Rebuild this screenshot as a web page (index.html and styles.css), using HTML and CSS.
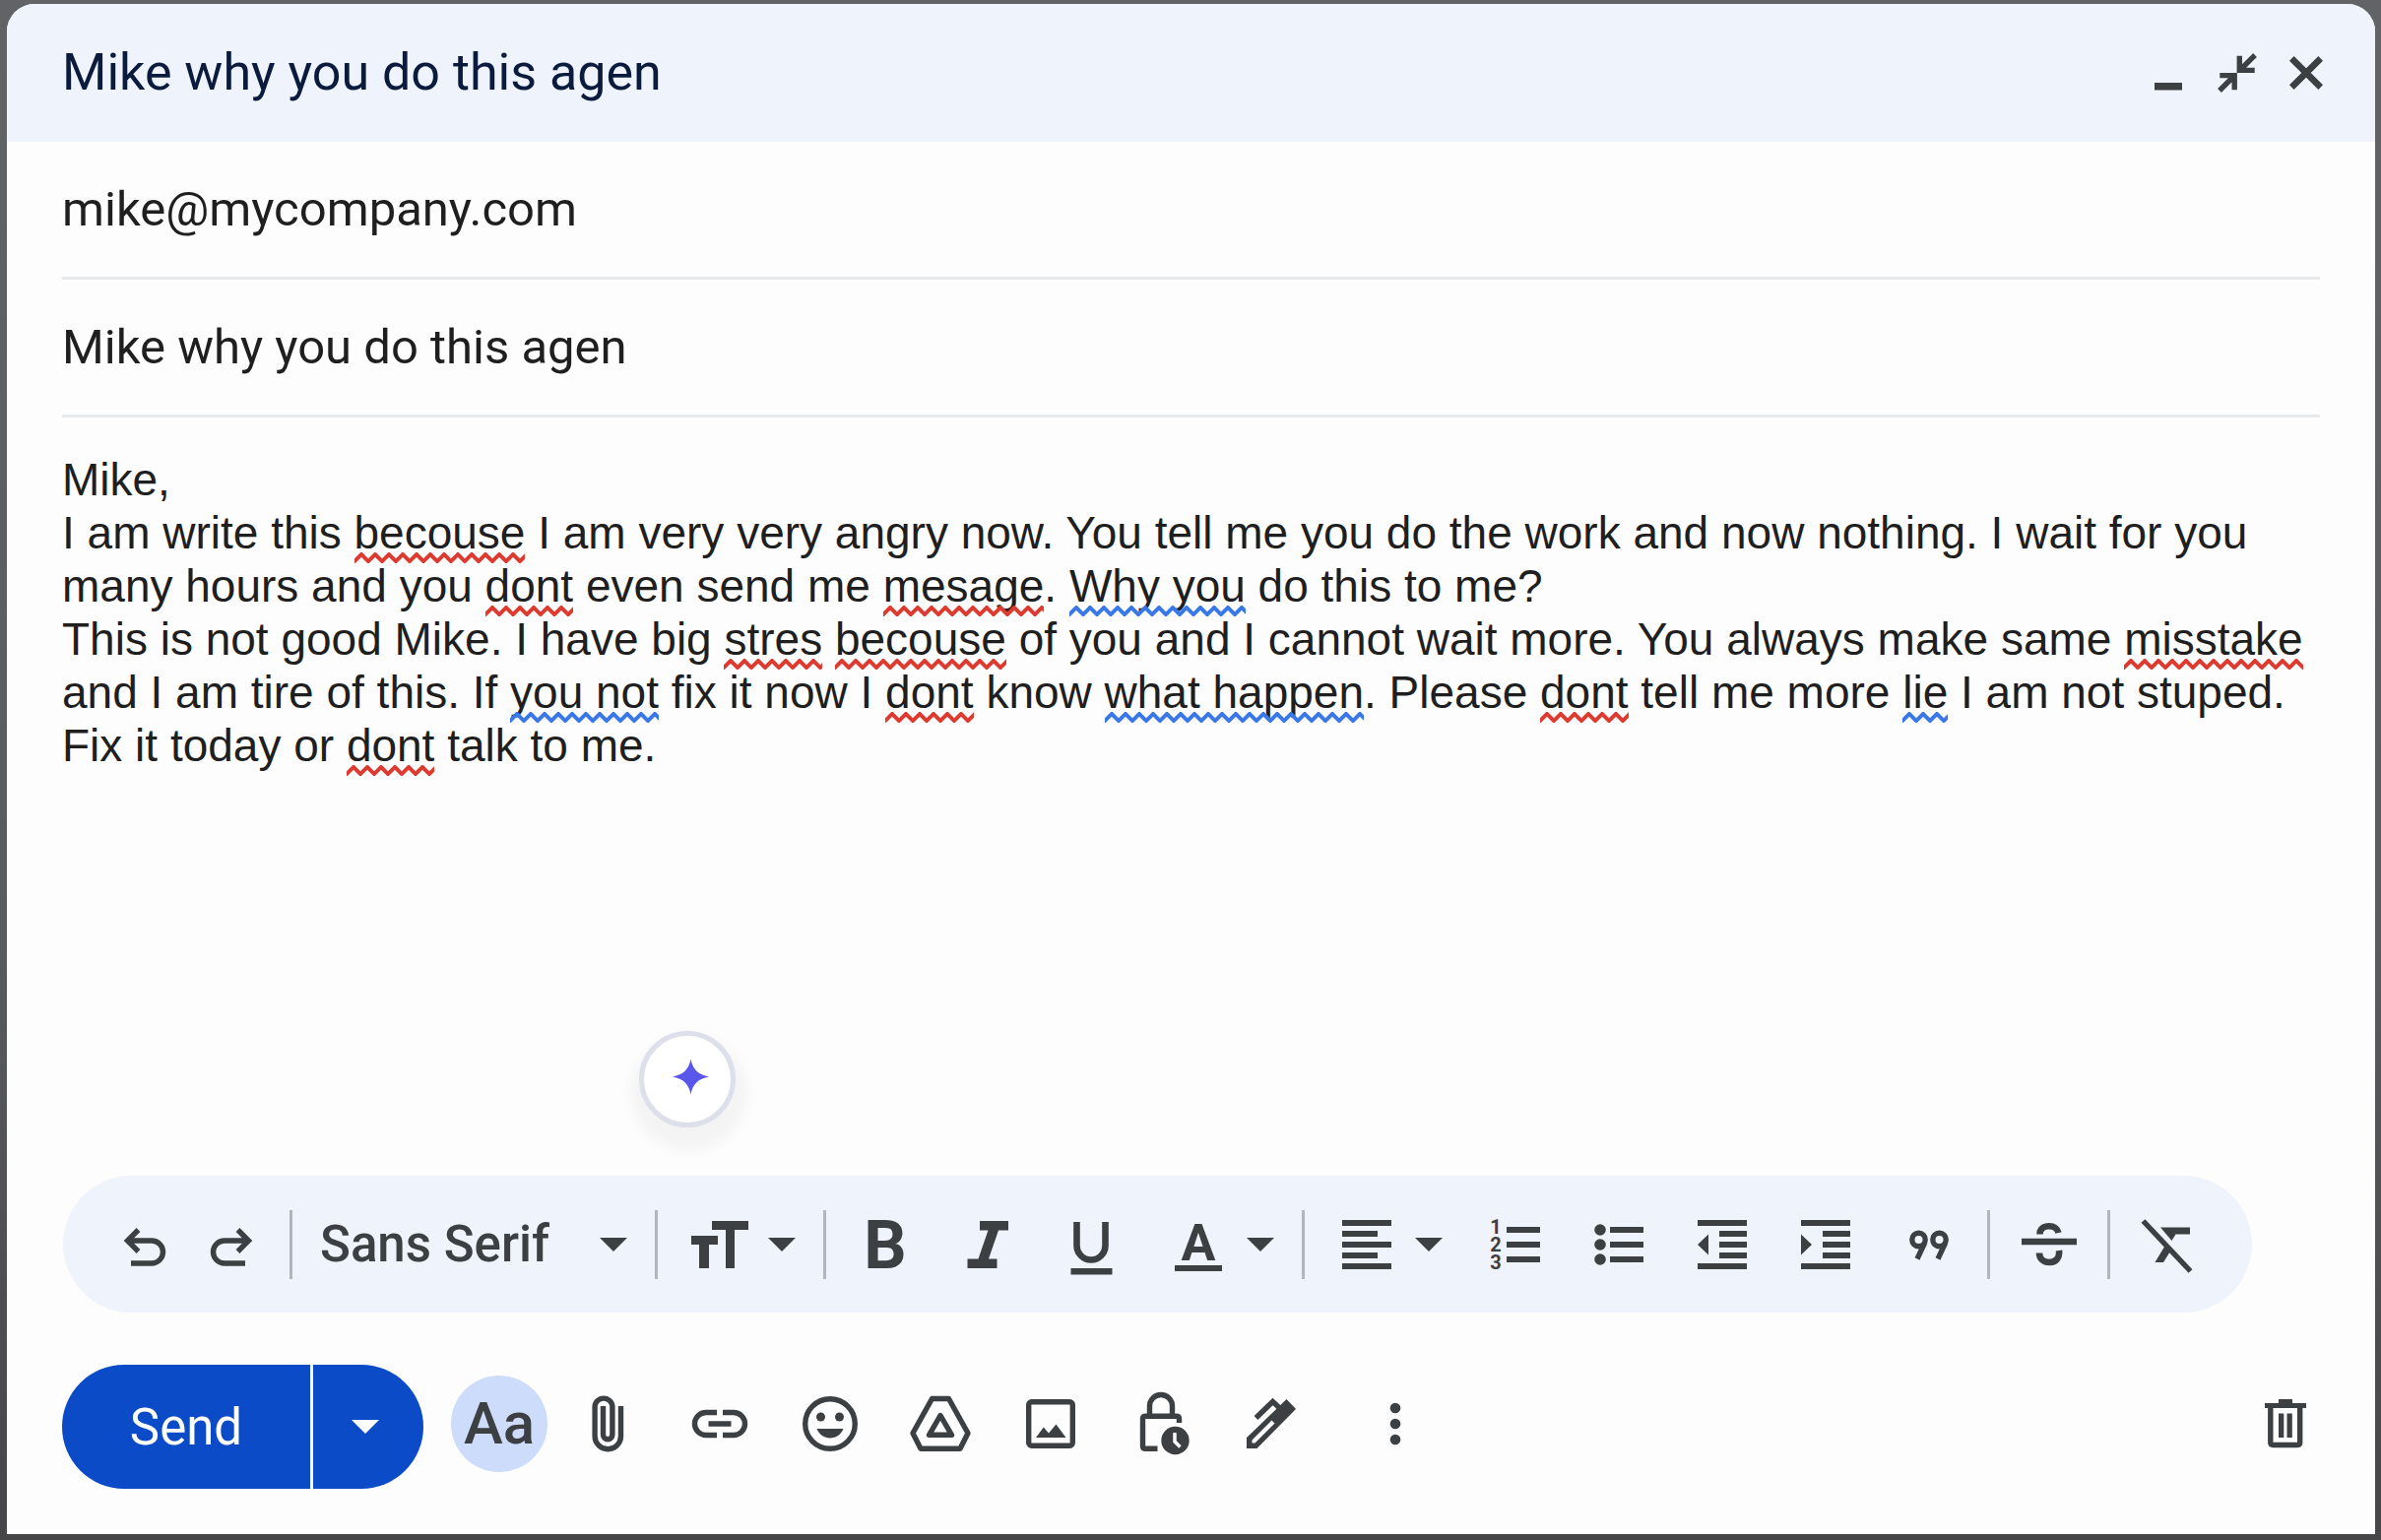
FILE: index.html
```html
<!DOCTYPE html>
<html lang="en">
<head>
  <meta charset="UTF-8" />
  <meta name="viewport" content="width=device-width, initial-scale=1.0"/>
  <title>Mike why you do this agen</title>
  <link rel="stylesheet" href="styles.css">
</head>
<body>
  <main class="compose">
    <header class="compose-header">
      <h1>Mike why you do this agen</h1>
      <button class="icon-btn" aria-label="Minimize">
        <svg class="icon" viewBox="0 0 70 70"><rect x="21" y="45" width="28" height="7.5"/></svg>
      </button>
      <button class="icon-btn" aria-label="Exit full screen">
        <svg class="icon line" viewBox="0 0 70 70"><path d="M37.3 17.7V32.4H52.7M38 32L53 17M32.2 52.3V37.6H17.3M32 38L17 53"/></svg>
      </button>
      <button class="icon-btn" aria-label="Close">
        <svg class="icon line thick" viewBox="0 0 70 70"><path d="M20.3 20.3L49.7 49.7M49.7 20.3L20.3 49.7"/></svg>
      </button>
    </header>

    <div class="field">
      <input type="text" aria-label="To" value="mike@mycompany.com">
    </div>
    <div class="field">
      <input type="text" aria-label="Subject" value="Mike why you do this agen">
    </div>

    <div class="editor">
      <div class="message" role="textbox" aria-label="Message body" aria-multiline="true" contenteditable="true" spellcheck="false">
        <p>Mike,</p>
        <p>I am write this <span class="spelling">becouse</span> I am very very angry now. You tell me you do the work and now nothing. I wait for you many hours and you <span class="spelling">dont</span> even send me <span class="spelling">mesage</span>. <span class="grammar">Why you</span> do this to me?</p>
        <p>This is not good Mike. I have big <span class="spelling">stres</span> <span class="spelling">becouse</span> of you and I cannot wait more. You always make same <span class="spelling">misstake</span> and I am tire of this. If <span class="grammar">you not</span> fix it now I <span class="spelling">dont</span> know <span class="grammar">what happen</span>. Please <span class="spelling">dont</span> tell me more <span class="grammar">lie</span> I am not stuped.</p>
        <p>Fix it today or <span class="spelling">dont</span> talk to me.</p>
      </div>
      <button class="assist" aria-label="Writing assistant">
        <svg viewBox="0 0 88 88"><path d="M47.500 23.500C49.500 34 55 39.500 66 41.500C55 43.500 49.500 49 47.500 59.500C45.500 49 40 43.500 29 41.500C40 39.500 45.500 34 47.500 23.500Z"/></svg>
      </button>
    </div>

    <div class="toolbar" role="toolbar" aria-label="Formatting options">
      <div class="history">
        <button class="tool" aria-label="Undo">
          <svg class="icon line" viewBox="0 0 70 70"><path d="M28.500 20L17.500 31L28.500 42M17.500 31H42a11.500 11.500 0 0 1 0 23H21"/></svg>
        </button>
        <button class="tool" aria-label="Redo">
          <svg class="icon line" viewBox="0 0 70 70"><path d="M41.500 20L52.500 31L41.500 42M52.500 31H28a11.500 11.500 0 0 0 0 23H49"/></svg>
        </button>
      </div>
      <span class="divider"></span>
      <div class="font-picker">
        <select aria-label="Font">
          <option>Sans Serif</option>
          <option>Serif</option>
          <option>Fixed Width</option>
        </select>
        <svg class="caret" viewBox="0 0 28 14"><path d="M0 0H28L14 14Z"/></svg>
      </div>
      <span class="divider"></span>
      <button class="tool with-caret" aria-label="Size">
        <svg class="icon" viewBox="0 0 70 70">
          <rect x="27" y="11" width="37" height="9"/><rect x="41" y="11" width="9" height="48"/>
          <rect x="6" y="26" width="27" height="9"/><rect x="14" y="26" width="10" height="33"/>
        </svg>
        <svg class="caret" viewBox="0 0 28 14"><path d="M0 0H28L14 14Z"/></svg>
      </button>
      <span class="divider"></span>
      <button class="tool" aria-label="Bold">
        <svg class="icon" viewBox="0 0 70 70"><text class="glyph-bold" x="35" y="59">B</text></svg>
      </button>
      <button class="tool" aria-label="Italic">
        <svg class="icon" viewBox="0 0 70 70"><path d="M26 11H55V20.500H45L35 49.500H43.500V59H13.500V49.500H24.500L34.500 20.500H26Z"/></svg>
      </button>
      <button class="tool" aria-label="Underline">
        <svg class="icon" viewBox="0 0 70 70">
          <path class="stroke thick" d="M19.500 12V36a14.500 14.500 0 0 0 29 0V12"/>
          <rect x="13.500" y="59" width="42" height="6.500"/>
        </svg>
      </button>
      <button class="tool with-caret" aria-label="Text color">
        <svg class="icon" viewBox="0 0 70 70">
          <text class="glyph-color" x="35" y="51">A</text>
          <rect x="11" y="56" width="48" height="6"/>
        </svg>
        <svg class="caret" viewBox="0 0 28 14"><path d="M0 0H28L14 14Z"/></svg>
      </button>
      <span class="divider"></span>
      <button class="tool with-caret" aria-label="Align">
        <svg class="icon" viewBox="0 0 70 70">
          <path d="M10 10h50v6H10zM10 21h36v6H10zM10 32h50v6H10zM10 43h36v6H10zM10 54h50v6H10z"/>
        </svg>
        <svg class="caret" viewBox="0 0 28 14"><path d="M0 0H28L14 14Z"/></svg>
      </button>
      <button class="tool" aria-label="Numbered list">
        <svg class="icon" viewBox="0 0 70 70">
          <text class="glyph-num" x="15" y="24">1</text>
          <text class="glyph-num" x="15" y="42">2</text>
          <text class="glyph-num" x="15" y="60">3</text>
          <path d="M26 17h34v6H26zM26 32h34v6H26zM26 47h34v6H26z"/>
        </svg>
      </button>
      <button class="tool" aria-label="Bulleted list">
        <svg class="icon" viewBox="0 0 70 70">
          <circle cx="16" cy="20" r="5.800"/><circle cx="16" cy="35" r="5.800"/><circle cx="16" cy="50" r="5.800"/>
          <path d="M26 17h34v6H26zM26 32h34v6H26zM26 47h34v6H26z"/>
        </svg>
      </button>
      <button class="tool" aria-label="Indent less">
        <svg class="icon" viewBox="0 0 70 70">
          <path d="M10 10h50v6H10zM32 21h28v6H32zM32 32h28v6H32zM32 43h28v6H32zM10 54h50v6H10zM21 24.500V45.500L10 35z"/>
        </svg>
      </button>
      <button class="tool" aria-label="Indent more">
        <svg class="icon" viewBox="0 0 70 70">
          <path d="M10 10h50v6H10zM32 21h28v6H32zM32 32h28v6H32zM32 43h28v6H32zM10 54h50v6H10zM10 24.500V45.500L21 35z"/>
        </svg>
      </button>
      <button class="tool" aria-label="Quote">
        <svg class="icon line" viewBox="0 0 70 70">
          <circle cx="24.500" cy="30" r="6.700"/><path d="M30.500 33.500L23 49.500"/>
          <circle cx="45.500" cy="30" r="6.700"/><path d="M51.500 33.500L44 49.500"/>
        </svg>
      </button>
      <span class="divider"></span>
      <button class="tool" aria-label="Strikethrough">
        <svg class="icon line thick" viewBox="0 0 70 70">
          <path d="M7 32H63M25.500 24.500C25.500 19 29.500 16.300 35 16.300C40 16.300 43.500 19 44.500 23M25 43.500C25 49 29 53 35.500 53C42 53 46 48 45 41"/>
        </svg>
      </button>
      <span class="divider"></span>
      <button class="tool" aria-label="Remove formatting">
        <svg class="icon" viewBox="2 0 70 70">
          <path class="stroke" d="M10.500 11L58.500 62"/>
          <path d="M28 17.500H58V24.500H43.500L39.500 31ZM33 35.500L38.500 41L31 53H22.500Z"/>
        </svg>
      </button>
    </div>

    <footer class="actions">
      <div class="send">
        <button class="send-main">Send</button>
        <button class="send-more" aria-label="More send options">
          <svg class="caret" viewBox="0 0 28 14"><path d="M0 0H28L14 14Z"/></svg>
        </button>
      </div>
      <button class="action" aria-label="Formatting options"><span class="format-on">Aa</span></button>
      <button class="action" aria-label="Attach files">
        <svg class="icon line" viewBox="0 0 70 70"><path d="M46.500 17V47.500a13.200 13.200 0 0 1-26.400 0V18a8.900 8.900 0 0 1 17.800 0V46a4.700 4.700 0 0 1-9.400 0V17"/></svg>
      </button>
      <button class="action" aria-label="Insert link">
        <svg class="icon line" viewBox="0 0 70 70"><path d="M32 23.500H21a11.500 11.500 0 0 0 0 23H32M38 23.500H49a11.500 11.500 0 0 1 0 23H38M23.500 35H46.500"/></svg>
      </button>
      <button class="action" aria-label="Insert emoji">
        <svg class="icon" viewBox="0 0 70 70">
          <circle class="stroke" cx="35" cy="35" r="25.300"/>
          <circle cx="25.500" cy="28" r="4.500"/><circle cx="44.500" cy="28" r="4.500"/>
          <path d="M21.500 40H48.500C46 46 41 49.500 35 49.500S24 46 21.500 40Z"/>
        </svg>
      </button>
      <button class="action" aria-label="Insert files using Drive">
        <svg class="icon line" viewBox="0 0 70 70"><path stroke-linejoin="round" d="M26.500 9.500H43.500L63 44.500L55 60.200H15L7 44.500ZM35 26.500L46.500 46.300H23.500Z"/></svg>
      </button>
      <button class="action" aria-label="Insert photo">
        <svg class="icon" viewBox="0 0 70 70">
          <rect class="stroke" x="12.700" y="12.700" width="44.600" height="44.600" rx="3"/>
          <path d="M20 49L27.800 38.500L33 44.500L40.500 35.500L50.500 49Z"/>
        </svg>
      </button>
      <button class="action" aria-label="Toggle confidential mode">
        <svg class="icon" viewBox="0 0 70 70">
          <path class="stroke" d="M23.500 27V17a11.500 11.500 0 0 1 23 0V27M53.500 34V30Q53.500 27.300 50.500 27.300H19.500Q16.500 27.300 16.500 30V57.500Q16.500 60.300 19.500 60.300H31.500"/>
          <circle cx="49.500" cy="52" r="14.200"/>
          <path class="clock-hand" d="M49 44V53L54.500 58.500"/>
        </svg>
      </button>
      <button class="action" aria-label="Insert signature">
        <svg class="icon" viewBox="0 0 70 70">
          <path fill-rule="evenodd" d="M10 60V49L50.500 10L60 20L20.500 60ZM15.500 54.500H18.500L38.500 34.500L35.500 31.500L15.500 51.500Z"/>
          <path class="stroke" d="M19.500 29L36.500 12.500L43 18.500"/>
        </svg>
      </button>
      <button class="action more" aria-label="More options">
        <svg class="icon" viewBox="0 0 70 70"><circle cx="35" cy="19" r="5.300"/><circle cx="35" cy="35" r="5.300"/><circle cx="35" cy="51" r="5.300"/></svg>
      </button>
      <button class="icon-btn discard" aria-label="Discard draft">
        <svg class="icon" viewBox="0 0 70 70">
          <path d="M28 10H42V14H56V19H14V14H28ZM28 24.500h5.300V49H28zM36.500 24.500h5.300V49H36.500z"/>
          <path class="stroke" d="M19.800 18V54Q19.800 56.500 22.500 56.500H47Q49.700 56.500 49.700 54V18"/>
        </svg>
      </button>
    </footer>
  </main>
</body>
</html>
```

FILE: styles.css
```css
* { box-sizing: border-box; }
body {
  margin: 0;
  padding: 4px 6px 6px 7px;
  min-height: 100vh;
  display: flex;
  background: linear-gradient(#626367, #5a5b5e 60%, #464648);
  font-family: Roboto, sans-serif;
  color: #1f1f1f;
}
button, input, select {
  font: inherit;
  color: inherit;
  border: none;
  background: none;
  margin: 0;
  padding: 0;
}
button { cursor: pointer; }

.compose {
  flex: 1;
  display: flex;
  flex-direction: column;
  background: #fdfdfd;
  border-radius: 28px 28px 0 0;
  overflow: hidden;
}
.compose-header {
  display: flex;
  align-items: center;
  height: 140px;
  padding: 0 35px 0 56px;
  background: #eef3fc;
}
.compose-header h1 {
  flex: 1;
  margin: 0;
  font-size: 52px;
  font-weight: 400;
  line-height: 60px;
  color: #0a1b3d;
}

/* icons */
.icon {
  display: block;
  width: 70px;
  height: 70px;
  fill: #3c4043;
  overflow: visible;
}
.line, .stroke {
  fill: none;
  stroke: #3c4043;
  stroke-width: 5.4;
}
.thick { stroke-width: 6.6; }
.caret {
  display: block;
  width: 28px;
  height: 14px;
  fill: #3c4043;
}
.icon text { text-anchor: middle; }
.glyph-bold { font-size: 68px; font-weight: 700; }
.glyph-color { font-size: 52px; font-weight: 700; }
.glyph-num { font-size: 20px; font-weight: 700; }
.icon-btn { width: 70px; height: 70px; }

.field {
  height: 140px;
  margin: 0 56px;
  border-bottom: 3px solid #e8e9ea;
}
.field input {
  width: 100%;
  height: 100%;
  font-size: 49px;
  outline: none;
}

.editor {
  flex: 1;
  position: relative;
  padding: 36px 56px;
}
.message {
  font-family: "Liberation Sans", Arial, sans-serif;
  font-size: 46px;
  line-height: 54px;
  outline: none;
}
.message p { margin: 0; }
.spelling, .grammar { position: relative; }
.spelling::after, .grammar::after {
  content: "";
  position: absolute;
  left: 0;
  right: 0;
  bottom: -5px;
  height: 11px;
  background-repeat: repeat-x;
  background-size: 14px 11px;
}
.spelling::after { background-image: url("data:image/svg+xml,%3Csvg xmlns='http://www.w3.org/2000/svg' viewBox='0 0 14 11'%3E%3Cpath d='M-7 2L0 9L7 2L14 9L21 2' fill='none' stroke='%23dd3b30' stroke-width='4'/%3E%3C/svg%3E"); }
.grammar::after { background-image: url("data:image/svg+xml,%3Csvg xmlns='http://www.w3.org/2000/svg' viewBox='0 0 14 11'%3E%3Cpath d='M-7 2L0 9L7 2L14 9L21 2' fill='none' stroke='%233b78e7' stroke-width='4'/%3E%3C/svg%3E"); }

/* floats over the message */
.assist {
  position: absolute;
  left: 642px;
  bottom: 49px;
  width: 98px;
  height: 98px;
  border: 5px solid #dddfeb;
  border-radius: 50%;
  background: #fff;
  box-shadow: 2px 14px 14px 10px rgba(0,0,0,0.04);
}
.assist svg { display: block; fill: #5956ec; }

.toolbar {
  align-self: flex-start;
  display: flex;
  align-items: center;
  height: 139px;
  margin-left: 57px;
  padding: 0 32px 0 39px;
  border-radius: 70px;
  background: #eef3fc;
}
.history {
  display: flex;
  margin-right: 8px;
}
.tool {
  display: flex;
  align-items: center;
  justify-content: center;
  width: 105px;
  height: 105px;
}
.history .tool { width: 88px; }
.with-caret { width: 154px; gap: 14px; }
.divider {
  width: 3px;
  height: 70px;
  margin: 0 7px;
  background: #b0b5bf;
}
.font-picker {
  display: grid;
  align-items: center;
  width: 354px;
}
.font-picker select, .font-picker .caret { grid-area: 1 / 1; }
.font-picker select {
  appearance: none;
  height: 105px;
  padding-left: 21px;
  font-size: 51px;
  font-weight: 500;
  color: #3c4043;
}
.font-picker .caret {
  justify-self: end;
  margin-right: 21px;
  pointer-events: none;
}

.actions {
  display: flex;
  align-items: flex-start;
  margin: 53px 56px 46px;
}
.send {
  display: flex;
  gap: 3px;
  margin-right: 21px;
}
.send button {
  height: 126px;
  background: #0b4bc8;
  color: #fff;
}
.send-main {
  width: 252px;
  border-radius: 63px 0 0 63px;
  font-size: 51px;
}
.send-more {
  width: 112px;
  padding-left: 39px;
  border-radius: 0 63px 63px 0;
}
.send-more .caret { fill: #fff; }
.action {
  display: flex;
  align-items: center;
  justify-content: center;
  width: 112px;
  height: 120px;
}
.format-on {
  width: 98px;
  height: 98px;
  border-radius: 50%;
  background: #ccdcfa;
  color: #3c4043;
  font-size: 60px;
  font-weight: 500;
  line-height: 98px;
  text-align: center;
}
.more { margin-left: 14px; }
.discard {
  height: 120px;
  margin-left: auto;
}
.clock-hand {
  fill: none;
  stroke: #fdfdfd;
  stroke-width: 3.5;
}
```
